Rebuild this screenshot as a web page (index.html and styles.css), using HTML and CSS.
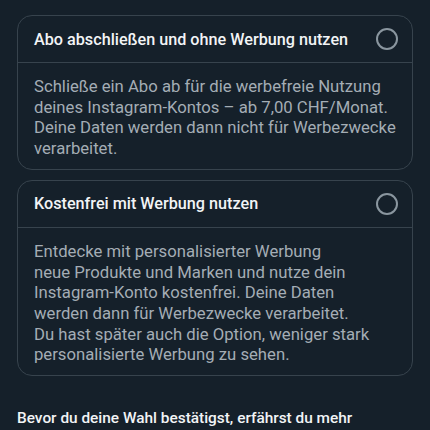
FILE: index.html
```html
<!DOCTYPE html>
<html lang="de">
<head>
<meta charset="utf-8">
<link rel="stylesheet" href="styles.css">
</head>
<body>
<main class="page">
  <section class="card">
    <div class="card-head">
      <span class="card-title">Abo abschließen und ohne Werbung nutzen</span>
      <span class="radio"></span>
    </div>
    <p class="card-body">Schließe ein Abo ab für die werbefreie Nutzung<br>deines Instagram-Kontos – ab 7,00 CHF/Monat.<br>Deine Daten werden dann nicht für Werbezwecke<br>verarbeitet.</p>
  </section>
  <section class="card">
    <div class="card-head">
      <span class="card-title">Kostenfrei mit Werbung nutzen</span>
      <span class="radio"></span>
    </div>
    <p class="card-body">Entdecke mit personalisierter Werbung<br>neue Produkte und Marken und nutze dein<br>Instagram-Konto kostenfrei. Deine Daten<br>werden dann für Werbezwecke verarbeitet.<br>Du hast später auch die Option, weniger stark<br>personalisierte Werbung zu sehen.</p>
  </section>
  <p class="note">Bevor du deine Wahl bestätigst, erfährst du mehr</p>
</main>
</body>
</html>
```
FILE: styles.css
```css
html, body {
  margin: 0;
  padding: 0;
  background: #15202a;
}
.page {
  font-family: Roboto, "Noto Sans", sans-serif;
  padding: 15px 17px 0 17px;
  display: flex;
  flex-direction: column;
  gap: 10px;
}
.card {
  border: 1.5px solid #37434d;
  border-radius: 15px;
}
.card-head {
  height: 46px;
  padding: 0 14px 0 16px;
  display: flex;
  align-items: center;
  justify-content: space-between;
  border-bottom: 1.5px solid #37434d;
}
.card-title {
  color: #f2f4f6;
  font-size: 16.2px;
  font-weight: 500;
}
.radio {
  width: 18px;
  height: 18px;
  border: 2px solid #8a969f;
  border-radius: 50%;
}
.card-body {
  margin: 0;
  padding: 14px 16px 9px 16px;
  color: #a4adb5;
  font-size: 16.7px;
  line-height: 20.7px;
  white-space: nowrap;
}
.note {
  margin: 23px 0 0 0;
  color: #f2f4f6;
  font-size: 15.4px;
  font-weight: 500;
}
```
